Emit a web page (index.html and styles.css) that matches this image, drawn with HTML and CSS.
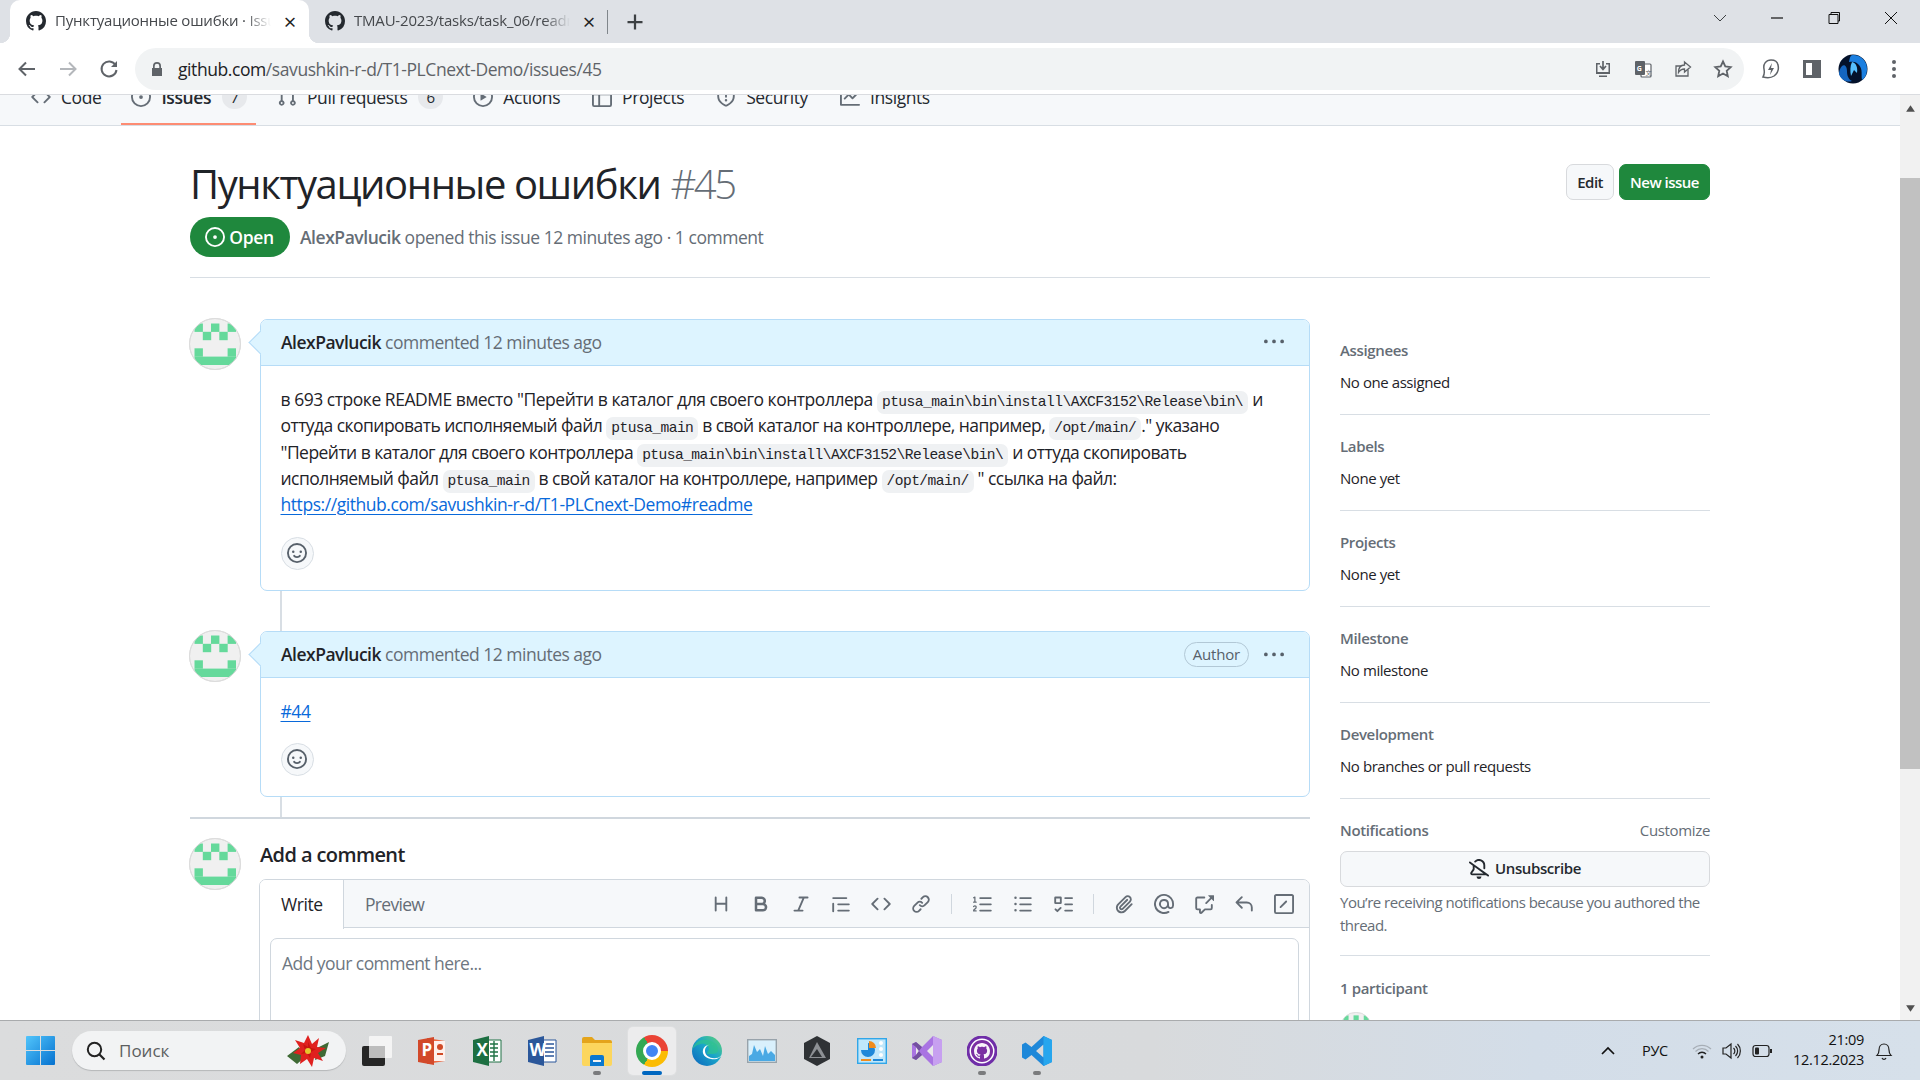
FILE: index.html
```html
<!DOCTYPE html>
<html lang="ru">
<head>
<meta charset="utf-8">
<title>Пунктуационные ошибки · Issue #45</title>
<link rel="stylesheet" href="styles.css">
</head>
<body>
<svg class="defs" aria-hidden="true">
<symbol id="mark" viewBox="0 0 16 16"><path d="M8 0c4.42 0 8 3.58 8 8a8.013 8.013 0 0 1-5.45 7.59c-.4.08-.55-.17-.55-.38 0-.27.01-1.13.01-2.2 0-.75-.25-1.23-.54-1.48 1.78-.2 3.65-.88 3.65-3.95 0-.88-.31-1.59-.82-2.15.08-.2.36-1.02-.08-2.12 0 0-.67-.22-2.2.82-.64-.18-1.32-.27-2-.27-.68 0-1.36.09-2 .27-1.53-1.03-2.2-.82-2.2-.82-.44 1.1-.16 1.92-.08 2.12-.51.56-.82 1.28-.82 2.15 0 3.06 1.86 3.75 3.64 3.95-.23.2-.44.55-.51 1.07-.46.21-1.61.55-2.33-.66-.15-.24-.6-.83-1.23-.82-.67.01-.27.38.01.53.34.19.73.9.82 1.13.16.45.68 1.31 2.69.94 0 .67.01 1.3.01 1.49 0 .21-.15.45-.55.38A7.995 7.995 0 0 1 0 8c0-4.42 3.58-8 8-8Z"/></symbol>
<symbol id="issue" viewBox="0 0 16 16"><path d="M8 9.5a1.5 1.5 0 1 0 0-3 1.5 1.5 0 0 0 0 3Z"/><path d="M8 0a8 8 0 1 1 0 16A8 8 0 0 1 8 0ZM1.5 8a6.5 6.5 0 1 0 13 0 6.5 6.5 0 0 0-13 0Z"/></symbol>
<symbol id="code" viewBox="0 0 16 16"><path d="m11.28 3.22 4.25 4.25a.75.75 0 0 1 0 1.06l-4.25 4.25a.749.749 0 0 1-1.275-.326.749.749 0 0 1 .215-.734L13.94 8l-3.72-3.72a.749.749 0 0 1 .326-1.275.749.749 0 0 1 .734.215Zm-6.56 0a.751.751 0 0 1 1.042.018.751.751 0 0 1 .018 1.042L2.06 8l3.72 3.72a.749.749 0 0 1-.326 1.275.749.749 0 0 1-.734-.215L.47 8.53a.75.75 0 0 1 0-1.06Z"/></symbol>
<symbol id="pull" viewBox="0 0 16 16"><path d="M1.5 3.25a2.25 2.25 0 1 1 3 2.122v5.256a2.251 2.251 0 1 1-1.5 0V5.372A2.25 2.25 0 0 1 1.5 3.25Zm5.677-.177L9.573.677A.25.25 0 0 1 10 .854V2.5h1A2.5 2.5 0 0 1 13.5 5v5.628a2.251 2.251 0 1 1-1.5 0V5a1 1 0 0 0-1-1h-1v1.646a.25.25 0 0 1-.427.177L7.177 3.427a.25.25 0 0 1 0-.354ZM3.75 2.5a.75.75 0 1 0 0 1.5.75.75 0 0 0 0-1.5Zm0 9.5a.75.75 0 1 0 0 1.5.75.75 0 0 0 0-1.5Zm8.25.75a.75.75 0 1 0 1.5 0 .75.75 0 0 0-1.5 0Z"/></symbol>
<symbol id="play" viewBox="0 0 16 16"><path d="M8 0a8 8 0 1 1 0 16A8 8 0 0 1 8 0ZM1.5 8a6.5 6.5 0 1 0 13 0 6.5 6.5 0 0 0-13 0Zm4.879-2.773 4.264 2.559a.25.25 0 0 1 0 .428l-4.264 2.559A.25.25 0 0 1 6 10.559V5.442a.25.25 0 0 1 .379-.215Z"/></symbol>
<symbol id="table" viewBox="0 0 16 16"><path d="M0 1.75C0 .784.784 0 1.75 0h12.5C15.216 0 16 .784 16 1.75v12.5A1.75 1.75 0 0 1 14.25 16H1.75A1.75 1.75 0 0 1 0 14.25ZM6.5 6.5v8h7.75a.25.25 0 0 0 .25-.25V6.5Zm8-1.5V1.75a.25.25 0 0 0-.25-.25H6.5V5Zm-13 1.5v7.75c0 .138.112.25.25.25H5v-8ZM5 5V1.5H1.75a.25.25 0 0 0-.25.25V5Z"/></symbol>
<symbol id="shield" viewBox="0 0 16 16"><path d="M7.467.133a1.748 1.748 0 0 1 1.066 0l5.25 1.68A1.75 1.75 0 0 1 15 3.48V7c0 1.566-.32 3.182-1.303 4.682-.983 1.498-2.585 2.813-5.032 3.855a1.697 1.697 0 0 1-1.33 0c-2.447-1.042-4.049-2.357-5.032-3.855C1.32 10.182 1 8.566 1 7V3.48a1.75 1.75 0 0 1 1.217-1.667Zm.61 1.429a.25.25 0 0 0-.153 0l-5.25 1.68a.25.25 0 0 0-.174.238V7c0 1.358.275 2.666 1.057 3.86.784 1.194 2.121 2.34 4.366 3.297a.196.196 0 0 0 .154 0c2.245-.956 3.582-2.104 4.366-3.298C13.225 9.666 13.5 8.36 13.5 7V3.48a.251.251 0 0 0-.174-.237l-5.25-1.68ZM8.75 4.75v3a.75.75 0 0 1-1.5 0v-3a.75.75 0 0 1 1.5 0ZM9 10.5a1 1 0 1 1-2 0 1 1 0 0 1 2 0Z"/></symbol>
<symbol id="graph" viewBox="0 0 16 16"><path d="M1.5 1.75V13.5h13.75a.75.75 0 0 1 0 1.5H.75a.75.75 0 0 1-.75-.75V1.75a.75.75 0 0 1 1.5 0Zm14.28 2.53-5.25 5.25a.75.75 0 0 1-1.06 0L7 7.06 4.28 9.78a.751.751 0 0 1-1.042-.018.751.751 0 0 1-.018-1.042l3.25-3.25a.75.75 0 0 1 1.06 0L10 7.94l4.72-4.72a.751.751 0 0 1 1.042.018.751.751 0 0 1 .018 1.042Z"/></symbol>
<symbol id="smiley" viewBox="0 0 16 16"><path d="M8 0a8 8 0 1 1 0 16A8 8 0 0 1 8 0ZM1.5 8a6.5 6.5 0 1 0 13 0 6.5 6.5 0 0 0-13 0Zm3.82 1.636a.75.75 0 0 1 1.038.175l.007.009c.103.118.22.222.35.31.264.178.683.37 1.285.37.602 0 1.02-.192 1.285-.371.13-.088.247-.192.35-.31l.007-.008a.75.75 0 0 1 1.222.87l-.022-.015c.02.013.021.015.021.015v.001l-.001.002-.002.003-.005.007-.014.019a2.066 2.066 0 0 1-.184.213c-.16.166-.338.316-.53.445-.63.418-1.37.638-2.127.629-.946 0-1.652-.308-2.126-.63a3.331 3.331 0 0 1-.715-.657l-.014-.02-.005-.006-.002-.003v-.002h-.001l.613-.432-.614.43a.75.75 0 0 1 .183-1.044ZM12 7a1 1 0 1 1-2 0 1 1 0 0 1 2 0ZM5 8a1 1 0 1 1 0-2 1 1 0 0 1 0 2Z"/></symbol>
<symbol id="kebab" viewBox="0 0 16 16"><path d="M8 9a1.5 1.5 0 1 0 0-3 1.5 1.5 0 0 0 0 3ZM1.5 9a1.5 1.5 0 1 0 0-3 1.5 1.5 0 0 0 0 3Zm13 0a1.5 1.5 0 1 0 0-3 1.5 1.5 0 0 0 0 3Z"/></symbol>
<symbol id="heading" viewBox="0 0 16 16"><path d="M3.75 2a.75.75 0 0 1 .75.75V7h7V2.75a.75.75 0 0 1 1.5 0v10.5a.75.75 0 0 1-1.5 0V8.5h-7v4.75a.75.75 0 0 1-1.5 0V2.75A.75.75 0 0 1 3.75 2Z"/></symbol>
<symbol id="bold" viewBox="0 0 16 16"><path d="M4 2h4.5a3.501 3.501 0 0 1 2.852 5.53A3.499 3.499 0 0 1 9.5 14H4a1 1 0 0 1-1-1V3a1 1 0 0 1 1-1Zm1 7v3h4.5a1.5 1.5 0 0 0 0-3Zm3.5-2a1.5 1.5 0 0 0 0-3H5v3Z"/></symbol>
<symbol id="italic" viewBox="0 0 16 16"><path d="M6 2.75A.75.75 0 0 1 6.75 2h6.5a.75.75 0 0 1 0 1.5h-2.505l-3.858 9H9.25a.75.75 0 0 1 0 1.5h-6.5a.75.75 0 0 1 0-1.5h2.505l3.858-9H6.75A.75.75 0 0 1 6 2.75Z"/></symbol>
<symbol id="quote" viewBox="0 0 16 16"><path d="M1.75 2.5h10.5a.75.75 0 0 1 0 1.5H1.75a.75.75 0 0 1 0-1.5Zm4 5h8.5a.75.75 0 0 1 0 1.5h-8.5a.75.75 0 0 1 0-1.5Zm0 5h8.5a.75.75 0 0 1 0 1.5h-8.5a.75.75 0 0 1 0-1.5ZM2.5 7.75v6a.75.75 0 0 1-1.5 0v-6a.75.75 0 0 1 1.5 0Z"/></symbol>
<symbol id="link" viewBox="0 0 16 16"><path d="m7.775 3.275 1.25-1.25a3.5 3.5 0 1 1 4.95 4.95l-2.5 2.5a3.5 3.5 0 0 1-4.95 0 .751.751 0 0 1 .018-1.042.751.751 0 0 1 1.042-.018 1.998 1.998 0 0 0 2.83 0l2.5-2.5a2.002 2.002 0 0 0-2.83-2.83l-1.25 1.25a.751.751 0 0 1-1.042-.018.751.751 0 0 1-.018-1.042Zm-4.69 9.64a1.998 1.998 0 0 0 2.83 0l1.25-1.25a.751.751 0 0 1 1.042.018.751.751 0 0 1 .018 1.042l-1.25 1.25a3.5 3.5 0 1 1-4.95-4.95l2.5-2.5a3.5 3.5 0 0 1 4.95 0 .751.751 0 0 1-.018 1.042.751.751 0 0 1-1.042.018 1.998 1.998 0 0 0-2.83 0l-2.5 2.5a1.998 1.998 0 0 0 0 2.83Z"/></symbol>
<symbol id="ol" viewBox="0 0 16 16"><path d="M5 3.25a.75.75 0 0 1 .75-.75h8.5a.75.75 0 0 1 0 1.5h-8.5A.75.75 0 0 1 5 3.25Zm0 5a.75.75 0 0 1 .75-.75h8.5a.75.75 0 0 1 0 1.5h-8.5A.75.75 0 0 1 5 8.25Zm0 5a.75.75 0 0 1 .75-.75h8.5a.75.75 0 0 1 0 1.5h-8.5a.75.75 0 0 1-.75-.75ZM.924 10.32a.5.5 0 0 1-.851-.525l.001-.001.001-.002.002-.004.007-.011c.097-.144.215-.273.348-.384.228-.19.588-.392 1.068-.392.468 0 .858.181 1.126.484.259.294.377.673.377 1.038 0 .987-.686 1.495-1.156 1.845l-.047.035c-.303.225-.522.4-.654.597h1.357a.5.5 0 0 1 0 1H.5a.5.5 0 0 1-.5-.5c0-1.005.692-1.52 1.167-1.875l.035-.025c.531-.396.8-.625.8-1.078a.57.57 0 0 0-.128-.376C1.806 10.068 1.695 10 1.5 10a.658.658 0 0 0-.429.163.835.835 0 0 0-.144.153ZM2.003 2.5V6h.503a.5.5 0 0 1 0 1H.5a.5.5 0 0 1 0-1h.503V3.308l-.28.14a.5.5 0 0 1-.446-.895l1.003-.5a.5.5 0 0 1 .723.447Z"/></symbol>
<symbol id="ul" viewBox="0 0 16 16"><path d="M5.75 2.5h8.5a.75.75 0 0 1 0 1.5h-8.5a.75.75 0 0 1 0-1.5Zm0 5h8.5a.75.75 0 0 1 0 1.5h-8.5a.75.75 0 0 1 0-1.5Zm0 5h8.5a.75.75 0 0 1 0 1.5h-8.5a.75.75 0 0 1 0-1.5ZM2 14a1 1 0 1 1 0-2 1 1 0 0 1 0 2Zm1-6a1 1 0 1 1-2 0 1 1 0 0 1 2 0ZM2 4a1 1 0 1 1 0-2 1 1 0 0 1 0 2Z"/></symbol>
<symbol id="task" viewBox="0 0 16 16"><path fill-rule="evenodd" d="M2 2h4a1 1 0 0 1 1 1v4a1 1 0 0 1-1 1H2a1 1 0 0 1-1-1V3a1 1 0 0 1 1-1Zm.5 1.5v3h3v-3Zm4.155 7.095a.75.75 0 0 1 0 1.06L4.03 14.28a.75.75 0 0 1-1.06 0l-1.5-1.5a.749.749 0 0 1 .326-1.275.749.749 0 0 1 .734.215l.97.97 2.095-2.095a.75.75 0 0 1 1.06 0ZM9.75 2.5h5.5a.75.75 0 0 1 0 1.5h-5.5a.75.75 0 0 1 0-1.5Zm0 5h5.5a.75.75 0 0 1 0 1.5h-5.5a.75.75 0 0 1 0-1.5Zm0 5h5.5a.75.75 0 0 1 0 1.5h-5.5a.75.75 0 0 1 0-1.5Z"/></symbol>
<symbol id="clip" viewBox="0 0 16 16"><path d="M12.212 3.02a1.753 1.753 0 0 0-2.478.003l-5.83 5.83a3.007 3.007 0 0 0-.88 2.127c0 .795.315 1.551.88 2.116.567.567 1.333.89 2.126.89.79 0 1.548-.321 2.116-.89l5.48-5.48a.75.75 0 0 1 1.061 1.06l-5.48 5.48a4.492 4.492 0 0 1-3.177 1.33c-1.2 0-2.345-.487-3.187-1.33a4.483 4.483 0 0 1-1.32-3.177c0-1.195.475-2.341 1.32-3.186l5.83-5.83a3.25 3.25 0 0 1 5.553 2.297c0 .863-.343 1.691-.953 2.301L7.439 12.39c-.375.377-.884.59-1.416.593a1.998 1.998 0 0 1-1.412-.593 1.992 1.992 0 0 1 0-2.828l5.48-5.48a.751.751 0 0 1 1.042.018.751.751 0 0 1 .018 1.042l-5.48 5.48a.492.492 0 0 0 0 .707.499.499 0 0 0 .352.154.51.51 0 0 0 .356-.154l5.833-5.827a1.755 1.755 0 0 0 0-2.481Z"/></symbol>
<symbol id="mention" viewBox="0 0 16 16"><path d="M4.75 2.37a6.501 6.501 0 0 0 6.5 11.26.75.75 0 0 1 .75 1.298A7.999 7.999 0 0 1 .989 4.148 8 8 0 0 1 16 7.75v1.5a2.75 2.75 0 0 1-5.072 1.475 3.999 3.999 0 0 1-6.65-4.19A4 4 0 0 1 12 8v1.25a1.25 1.25 0 0 0 2.5 0V7.867a6.5 6.5 0 0 0-9.75-5.496ZM10.5 8a2.5 2.5 0 1 0-5 0 2.5 2.5 0 0 0 5 0Z"/></symbol>
<symbol id="xref" viewBox="0 0 16 16"><path d="M2.75 3.5a.25.25 0 0 0-.25.25v7.5c0 .138.112.25.25.25h2a.75.75 0 0 1 .75.75v2.19l2.72-2.72a.749.749 0 0 1 .53-.22h4.5a.25.25 0 0 0 .25-.25v-2.5a.75.75 0 0 1 1.5 0v2.5A1.75 1.75 0 0 1 13.25 13H9.06l-2.573 2.573A1.458 1.458 0 0 1 4 14.543V13H2.75A1.75 1.75 0 0 1 1 11.25v-7.5C1 2.784 1.784 2 2.75 2h5.5a.75.75 0 0 1 0 1.5ZM16 1.25v4.146a.25.25 0 0 1-.427.177L14.03 4.03l-3.75 3.75a.749.749 0 0 1-1.275-.326.749.749 0 0 1 .215-.734l3.75-3.75-1.543-1.543A.25.25 0 0 1 11.604 1h4.146a.25.25 0 0 1 .25.25Z"/></symbol>
<symbol id="reply" viewBox="0 0 16 16"><path d="M6.78 1.97a.75.75 0 0 1 0 1.06L3.81 6h6.44A4.75 4.75 0 0 1 15 10.75v2.5a.75.75 0 0 1-1.5 0v-2.5a3.25 3.25 0 0 0-3.25-3.25H3.81l2.97 2.97a.749.749 0 0 1-.326 1.275.749.749 0 0 1-.734-.215L1.47 7.28a.75.75 0 0 1 0-1.06l4.25-4.25a.75.75 0 0 1 1.06 0Z"/></symbol>
<symbol id="slash" viewBox="0 0 16 16"><path d="M0 1.75C0 .784.784 0 1.75 0h12.5C15.216 0 16 .784 16 1.75v12.5A1.75 1.75 0 0 1 14.25 16H1.75A1.75 1.75 0 0 1 0 14.25Zm1.75-.25a.25.25 0 0 0-.25.25v12.5c0 .138.112.25.25.25h12.5a.25.25 0 0 0 .25-.25V1.75a.25.25 0 0 0-.25-.25Zm7.47 3.97a.75.75 0 0 1 1.06 1.06l-4.5 4.5a.75.75 0 0 1-1.06-1.06Z"/></symbol>
<symbol id="bellslash" viewBox="0 0 16 16"><path d="m4.182 4.31.016.011 10.104 7.316.013.01 1.375.996a.75.75 0 1 1-.88 1.214L13.626 13H2.518a1.516 1.516 0 0 1-1.263-2.36l1.703-2.554A.255.255 0 0 0 3 7.947V5.305L.31 3.357a.75.75 0 1 1 .88-1.214Zm7.373 7.19L4.5 6.391v1.556c0 .346-.102.683-.294.97l-1.703 2.556a.017.017 0 0 0-.003.01c0 .005.002.009.005.012l.006.004.007.001ZM8 1.5c-.997 0-1.895.416-2.534 1.086A.75.75 0 0 1 4.38 1.55 5 5 0 0 1 13 5v2.373a.75.75 0 0 1-1.5 0V5A3.5 3.5 0 0 0 8 1.5ZM8 16a2 2 0 0 1-1.985-1.75c-.017-.137.097-.25.235-.25h3.5c.138 0 .252.113.235.25A2 2 0 0 1 8 16Z"/></symbol>
<clipPath id="avclip"><circle cx="26" cy="26" r="25.5"/></clipPath>
<symbol id="avatar" viewBox="0 0 52 52">
<circle cx="26" cy="26" r="25.5" fill="#f0f0f0" stroke="#dcdcdc"/>
<g clip-path="url(#avclip)" fill="#65d99b">
<rect x="5.5" y="5.5" width="8.4" height="8.4"/><rect x="22" y="5.5" width="8.4" height="8.4"/><rect x="38.6" y="5.5" width="8.4" height="8.4"/>
<rect x="13.8" y="13.8" width="8.4" height="8.4"/><rect x="30.3" y="13.8" width="8.4" height="8.4"/>
<rect x="5.5" y="30.3" width="8.4" height="8.4"/><rect x="38.6" y="30.3" width="8.4" height="8.4"/>
<rect x="5.5" y="38.6" width="41.5" height="8.4"/>
</g>
<circle cx="26" cy="26" r="25.5" fill="none" stroke="#dcdcdc"/>
</symbol>
</svg>

<header class="tabstrip">
  <div class="tab tab-active">
    <svg class="fav"><use href="#mark"/></svg>
    <span class="tab-title">Пунктуационные ошибки · Issue #45</span>
    <span class="tab-x">×</span>
  </div>
  <div class="tab">
    <svg class="fav"><use href="#mark"/></svg>
    <span class="tab-title">TMAU-2023/tasks/task_06/readme.md</span>
    <span class="tab-x">×</span>
  </div>
  <span class="tab-sep"></span>
  <svg class="tab-plus" viewBox="0 0 16 16"><path d="M8 2v12M2 8h12" stroke="#3c4043" stroke-width="1.8" fill="none"/></svg>
  <div class="win">
    <svg viewBox="0 0 14 14"><path d="M1 4l6 6 6-6" fill="none" stroke="#3c4043"/></svg>
    <svg viewBox="0 0 14 14"><path d="M1 7h12" stroke="#111" stroke-width="1.2"/></svg>
    <svg viewBox="0 0 14 14"><path d="M2 3.5h9v9H2zM4 3.5V1.5h8.5v8.5h-1.5" fill="none" stroke="#111"/></svg>
    <svg viewBox="0 0 14 14"><path d="M1 1l12 12M13 1L1 13" stroke="#111" fill="none"/></svg>
  </div>
</header>

<nav class="toolbar">
  <svg class="tb" viewBox="0 0 24 24"><path d="M20 12H5m6-6.500L4.500 12l6.500 6.500" fill="none" stroke="#5f6368" stroke-width="2"/></svg>
  <svg class="tb" viewBox="0 0 24 24"><path d="M4 12h15m-6-6.500l6.500 6.500-6.500 6.500" fill="none" stroke="#b4b7bb" stroke-width="2"/></svg>
  <svg class="tb" viewBox="0 0 24 24"><path d="M18.500 8A7.500 7.500 0 1 0 19.500 13" fill="none" stroke="#5f6368" stroke-width="2"/><path d="M20 4v6h-6z" fill="#5f6368"/></svg>
  <div class="omni">
    <svg class="lock" viewBox="0 0 12 16"><path d="M2 7V5a4 4 0 0 1 8 0v2h1v8H1V7zm1.700 0h4.600V5a2.300 2.300 0 0 0-4.600 0z" fill="#5f6368"/></svg>
    <span class="url"><b>github.com</b>/savushkin-r-d/T1-PLCnext-Demo/issues/45</span>
    <div class="omni-icons">
      <svg viewBox="0 0 20 20"><path d="M3 4h4v1.500H4.500V13h11V5.500H13V4h4v11H3zM6 16.500h8V18H6z" fill="#5f6368"/><path d="M10 2v8m-3-3l3 3.500L13 7" fill="none" stroke="#5f6368" stroke-width="1.700"/></svg>
      <svg viewBox="0 0 20 20"><rect x="8" y="5" width="10" height="13" rx="1" fill="#fff" stroke="#5f6368" stroke-width="1.200"/><rect x="2" y="2" width="10" height="14" rx="1" fill="#5f6368"/><text x="3.800" y="12" class="gt">G</text><text x="12.500" y="15.500" class="gt dark">文</text></svg>
      <svg viewBox="0 0 20 20"><path d="M15 10.500V17H3V7h5" fill="none" stroke="#5f6368" stroke-width="1.300"/><path d="M11.500 3l6 5-6 5v-3c-3 0-4.500 1-6 3.500 0-4.500 2-7.500 6-7.500z" fill="none" stroke="#5f6368" stroke-width="1.300"/></svg>
      <svg viewBox="0 0 20 20"><path d="M10 2.500l2.300 5 5.400.6-4 3.700 1.100 5.400L10 14.500l-4.800 2.700 1.100-5.400-4-3.700 5.400-.6z" fill="none" stroke="#5f6368" stroke-width="1.800"/></svg>
    </div>
  </div>
  <svg class="tb" viewBox="0 0 22 24"><path d="M11 3C6 3 3 7 4 12c.500 3 1 5-1 8 4 1 8 1 11-1 4-3 5-7 4-11-.500-3-3-5-7-5z" fill="none" stroke="#5f6368" stroke-width="1.500"/><path d="M12 6l-4 7h3l-1 5 4-7h-3z" fill="#5f6368"/></svg>
  <svg class="tb" viewBox="0 0 24 24"><path fill-rule="evenodd" d="M3 3h18v18H3zM6 6v12h6V6z" fill="#5f6368"/></svg>
  <svg class="tb profile" viewBox="0 0 30 30"><circle cx="15" cy="15" r="14.500" fill="#04112a"/><path d="M15 1a14 14 0 0 1 14 14c0 5-2 9-5 11-1-6 1-10-3-15-2-3-6-4-10-3 1-4 1-7 4-7z" fill="#1b7fe0"/><path d="M4 12c3-2 5 1 5 5s1 8 5 10c-5 2-11-1-13-7 0-3 1-6 3-8z" fill="#1465c0"/><path d="M14 8c4 1 6 5 5 11l-3-3-3 6c-1-5-1-10 1-14z" fill="#56c0ff"/></svg>
  <svg class="tb" viewBox="0 0 24 24"><circle cx="12" cy="5" r="2" fill="#5f6368"/><circle cx="12" cy="12" r="2" fill="#5f6368"/><circle cx="12" cy="19" r="2" fill="#5f6368"/></svg>
</nav>

<div class="viewport">
  <main class="page">
    <div class="repo-nav">
      <a class="rn rn-code"><svg class="oc"><use href="#code"/></svg>Code</a>
      <a class="rn rn-active"><svg class="oc"><use href="#issue"/></svg><b>Issues</b><span class="counter">7</span></a>
      <a class="rn"><svg class="oc"><use href="#pull"/></svg>Pull requests<span class="counter">6</span></a>
      <a class="rn"><svg class="oc"><use href="#play"/></svg>Actions</a>
      <a class="rn"><svg class="oc"><use href="#table"/></svg>Projects</a>
      <a class="rn"><svg class="oc"><use href="#shield"/></svg>Security</a>
      <a class="rn"><svg class="oc"><use href="#graph"/></svg>Insights</a>
    </div>
    <div class="container">
      <section class="issue-head">
        <div class="title-row">
          <h1 class="title">Пунктуационные ошибки <span class="num">#45</span></h1>
          <div class="actions"><button class="btn">Edit</button><button class="btn btn-green">New issue</button></div>
        </div>
        <div class="meta">
          <span class="pill"><svg class="oc"><use href="#issue"/></svg>Open</span>
          <span class="meta-text"><b>AlexPavlucik</b> opened this issue 12 minutes ago · 1 comment</span>
        </div>
      </section>
      <div class="columns">
        <div class="discussion">
          <article class="item">
            <svg class="avatar"><use href="#avatar"/></svg>
            <div class="box">
              <div class="box-head"><span><b>AlexPavlucik</b> <span class="muted">commented 12 minutes ago</span></span>
                <svg class="oc kebab"><use href="#kebab"/></svg></div>
              <div class="box-body">
                <p class="md md-long"><span class="l1">в 693 строке README вместо "Перейти в каталог для своего контроллера <code>ptusa_main\bin\install\AXCF3152\Release\bin\</code> и</span><br>оттуда скопировать исполняемый файл <code>ptusa_main</code> в свой каталог на контроллере, например, <code>/opt/main/</code>." указано<br>"Перейти в каталог для своего контроллера <code>ptusa_main\bin\install\AXCF3152\Release\bin\</code> и оттуда скопировать<br>исполняемый файл <code>ptusa_main</code> в свой каталог на контроллере, например <code>/opt/main/</code> " ссылка на файл:<br><a class="lnk">https://github.com/savushkin-r-d/T1-PLCnext-Demo#readme</a></p>
                <button class="react"><svg class="oc"><use href="#smiley"/></svg></button>
              </div>
            </div>
          </article>
          <div class="tl tl-40"></div>
          <article class="item">
            <svg class="avatar"><use href="#avatar"/></svg>
            <div class="box">
              <div class="box-head"><span><b>AlexPavlucik</b> <span class="muted">commented 12 minutes ago</span></span>
                <span class="author">Author</span>
                <svg class="oc kebab"><use href="#kebab"/></svg></div>
              <div class="box-body">
                <p class="md"><a class="lnk">#44</a></p>
                <button class="react"><svg class="oc"><use href="#smiley"/></svg></button>
              </div>
            </div>
          </article>
          <div class="tl tl-20"></div>
          <div class="thick"></div>
          <article class="item item-new">
            <svg class="avatar"><use href="#avatar"/></svg>
            <div class="composer">
              <h2 class="add">Add a comment</h2>
              <div class="editor">
                <div class="ed-head">
                  <span class="ed-tab on">Write</span>
                  <span class="ed-tab">Preview</span>
                  <div class="ed-tools">
                    <svg class="oc"><use href="#heading"/></svg>
                    <svg class="oc"><use href="#bold"/></svg>
                    <svg class="oc"><use href="#italic"/></svg>
                    <svg class="oc"><use href="#quote"/></svg>
                    <svg class="oc"><use href="#code"/></svg>
                    <svg class="oc"><use href="#link"/></svg>
                    <i class="ed-sep"></i>
                    <svg class="oc"><use href="#ol"/></svg>
                    <svg class="oc"><use href="#ul"/></svg>
                    <svg class="oc"><use href="#task"/></svg>
                    <i class="ed-sep"></i>
                    <svg class="oc"><use href="#clip"/></svg>
                    <svg class="oc"><use href="#mention"/></svg>
                    <svg class="oc"><use href="#xref"/></svg>
                    <svg class="oc"><use href="#reply"/></svg>
                    <svg class="oc"><use href="#slash"/></svg>
                  </div>
                </div>
                <div class="ed-body"><div class="ta">Add your comment here...</div></div>
              </div>
            </div>
          </article>
        </div>
        <aside class="sidebar">
          <div class="sec"><div class="lab">Assignees</div><div class="val">No one assigned</div></div>
          <div class="sec"><div class="lab">Labels</div><div class="val">None yet</div></div>
          <div class="sec"><div class="lab">Projects</div><div class="val">None yet</div></div>
          <div class="sec"><div class="lab">Milestone</div><div class="val">No milestone</div></div>
          <div class="sec"><div class="lab">Development</div><div class="val">No branches or pull requests</div></div>
          <div class="sec sec-notif">
            <div class="lab lab-row"><span>Notifications</span><span class="cust">Customize</span></div>
            <button class="unsub"><svg class="oc"><use href="#bellslash"/></svg>Unsubscribe</button>
            <p class="why">You’re receiving notifications because you authored the thread.</p>
          </div>
          <div class="sec sec-last"><div class="lab">1 participant</div><svg class="mini"><use href="#avatar"/></svg></div>
        </aside>
      </div>
    </div>
  </main>
  <div class="scrollbar">
    <svg class="arrow" viewBox="0 0 10 10"><path d="M5 2l4 6H1z" fill="#505050"/></svg>
    <div class="thumb"></div>
    <svg class="arrow arrow-d" viewBox="0 0 10 10"><path d="M5 8L1 2h8z" fill="#505050"/></svg>
  </div>
</div>

<footer class="taskbar">
  <svg class="start" viewBox="0 0 29 29"><defs><linearGradient id="wg" x1="0" y1="0" x2="1" y2="1"><stop offset="0" stop-color="#52c5fb"/><stop offset="1" stop-color="#0571cf"/></linearGradient></defs><path d="M0 1a1 1 0 0 1 1-1h13v14H0zM15 0h13a1 1 0 0 1 1 1v13H15zM0 15h14v14H1a1 1 0 0 1-1-1zM15 15h14v13a1 1 0 0 1-1 1H15z" fill="url(#wg)"/></svg>
  <div class="search">
    <svg class="s-ico" viewBox="0 0 20 20"><circle cx="8.500" cy="8.500" r="6.700" fill="none" stroke="#222" stroke-width="2"/><path d="M13.500 13.500l5 5" stroke="#222" stroke-width="2.200"/></svg>
    <span class="s-txt">Поиск</span>
    <svg class="flower" viewBox="0 0 46 34"><path d="M2 22l12-9 6 10-8 7zM44 8l-12 6-2 12 10-4z" fill="#3f6a35"/><path d="M23 1l4 9 7-6-2 9 9 1-8 5 5 8-9-3-2 9-5-8-7 5 1-9-8-2 7-5-5-8 9 3z" fill="#e0211f"/><path d="M23 8l3 6 5 1-5 3-1 6-3-5-6 1 4-4-2-6 5 3z" fill="#c9150f"/><circle cx="23" cy="17" r="3" fill="#e6c52c"/></svg>
  </div>
  <div class="slot"><svg class="ti" viewBox="0 0 30 30"><rect x="0" y="10" width="23" height="20" rx="2" fill="#262626"/><rect x="7" y="0" width="23" height="22" rx="1" fill="#f4f4f4"/><rect x="7" y="10" width="16" height="12" fill="#bdbdbd"/></svg></div>
  <div class="slot"><svg class="ti" viewBox="0 0 30 30"><path d="M10 2l18 3v20l-18 3z" fill="#ef6a43"/><path d="M17 5h11v20H17z" fill="#fff" opacity=".9"/><rect x="20" y="8" width="6" height="6" rx="3" fill="#d04a26"/><rect x="20" y="17" width="6" height="2" fill="#d04a26"/><path d="M1 4l16-3v28L1 26z" fill="#d2492a"/><text x="4.500" y="20" class="ti-l">P</text></svg></div>
  <div class="slot"><svg class="ti" viewBox="0 0 30 30"><path d="M15 4h14v22H15z" fill="#fff" stroke="#217346"/><path d="M18 8h8M18 12h8M18 16h8M18 20h8M22 5v20" stroke="#217346" stroke-width="1.400"/><path d="M1 4l16-4v30L1 26z" fill="#1d6f42"/><text x="4.500" y="20" class="ti-l">X</text></svg></div>
  <div class="slot"><svg class="ti" viewBox="0 0 30 30"><path d="M15 4h14v22H15z" fill="#fff" stroke="#2b579a"/><path d="M18 8h9M18 12h9M18 16h9M18 20h9" stroke="#2b579a" stroke-width="1.500"/><path d="M1 4l16-4v30L1 26z" fill="#2b579a"/><text x="2.500" y="20" class="ti-l">W</text></svg></div>
  <div class="slot"><svg class="ti" viewBox="0 0 30 30"><path d="M0 3a2 2 0 0 1 2-2h8l3 3h15a2 2 0 0 1 2 2v2H0z" fill="#e4a41b"/><path d="M0 7h30v21a2 2 0 0 1-2 2H2a2 2 0 0 1-2-2z" fill="#fcd65d"/><path d="M8 21a2 2 0 0 1 2-2h10a2 2 0 0 1 2 2v9H8z" fill="#0b78cf"/><rect x="11" y="24" width="8" height="2" fill="#f2f2f2"/></svg><i class="dot"></i></div>
  <div class="slot slot-on"><span class="chrome"><span class="chrome-c"></span></span><i class="bar"></i></div>
  <div class="slot"><svg class="ti" viewBox="0 0 30 30"><defs><linearGradient id="eg" x1="1" y1="0" x2="0" y2="1"><stop offset="0" stop-color="#62d66d"/><stop offset=".45" stop-color="#1ba7c9"/><stop offset="1" stop-color="#0b63bd"/></linearGradient></defs><circle cx="15" cy="15" r="15" fill="url(#eg)"/><path d="M30 18c-1 4-6 6-11 5-6-1-9-5-8-9 1-5 6-6 10-5-5-1-8 2-8 6 0 5 6 8 11 7 3 0 5-2 6-4z" fill="#fff"/><path d="M0 14C2 6 9 3 15 4c7 1 11 5 11 10 0 3-3 4-6 4h-5c0-3 2-3 2-6-1-3-4-5-8-4-5 1-8 4-9 6z" fill="#2fc48a" opacity=".65"/></svg></div>
  <div class="slot"><svg class="ti" viewBox="0 0 30 30"><rect x=".7" y="3.700" width="28.600" height="22.600" fill="#d9f0fc" stroke="#98a3ab" stroke-width="1.400"/><path d="M2 25V20l3-2 2-9 3 7 3-3 3 7 2-10 3 8 3-3 4 4v6z" fill="#4aa9e4"/></svg></div>
  <div class="slot"><svg class="ti" viewBox="0 0 30 30"><path d="M15 0l13 7v16l-13 7-13-7V7z" fill="#2f3235"/><path d="M15 6l9 16H7z" fill="#8d9094"/><path d="M15 13l5 8H9z" fill="#2f3235"/></svg></div>
  <div class="slot"><svg class="ti" viewBox="0 0 30 30"><rect x=".7" y="2.700" width="28.600" height="24.600" fill="#bfe7fb" stroke="#31a6e8" stroke-width="1.400"/><path d="M11 7a7 7 0 1 1-7 7h7z" fill="#1e88d9"/><path d="M12 5a7 7 0 0 1 7 7h-7z" fill="#f08c1d"/><rect x="4" y="23" width="10" height="2" fill="#f08c1d"/><rect x="16" y="23" width="10" height="2" fill="#1e88d9"/><circle cx="24" cy="7" r="2" fill="#fff"/><circle cx="24" cy="13" r="2" fill="#fff"/><circle cx="24" cy="19" r="2" fill="#fff"/></svg></div>
  <div class="slot"><svg class="ti" viewBox="0 0 30 30"><path d="M21 0l9 4v22l-9 4-11-11-6 5-4-2V8l4-2 6 5z" fill="#a974e2"/><path d="M21 0l9 4v22l-9 4z" fill="#c7a0f0"/><path d="M21 9l-6 6 6 6z" fill="#e8e8ea"/><path d="M4 11v8l3-4z" fill="#e8e8ea"/><path d="M0 8l4-2 6 5-3 4-3-4zM0 22l4 2 6-5-3-4-3 4z" fill="#73509f"/></svg></div>
  <div class="slot"><svg class="ti" viewBox="0 0 30 30"><circle cx="15" cy="15" r="14" fill="#fff" stroke="#6f2da8" stroke-width="3"/><circle cx="15" cy="15" r="11" fill="#7b2fa3"/><svg x="7" y="7" width="16" height="16"><use href="#mark" fill="#fff" opacity=".95"/></svg></svg><i class="dot"></i></div>
  <div class="slot"><svg class="ti" viewBox="0 0 30 30"><path d="M21.500 0L30 4v22l-8.500 4L9.500 19l-6 4.500L0 21.500v-13L3.500 6.500l6 4.500zM21.500 8.500L14 15l7.500 6.500z" fill-rule="evenodd" fill="#1e88d9"/><path d="M21.500 0L30 4v22l-8.500 4V21.500V8.500z" fill="#26a6ee"/></svg><i class="dot"></i></div>
  <div class="tray">
    <svg class="t-caret" viewBox="0 0 16 10"><path d="M2 8l6-6 6 6" fill="none" stroke="#111" stroke-width="1.700"/></svg>
    <span class="t-lang">РУС</span>
    <svg class="t-i" viewBox="0 0 20 16"><path d="M1 6a13 13 0 0 1 18 0M3.500 8.500a9 9 0 0 1 13 0" fill="none" stroke="#a7aeb6" stroke-width="1.300"/><path d="M6 11a5.500 5.500 0 0 1 8 0" fill="none" stroke="#222" stroke-width="1.300"/><circle cx="10" cy="14" r="1.500" fill="#222"/></svg>
    <svg class="t-i" viewBox="0 0 20 18"><path d="M1 6h3l5-4v14l-5-4H1z" fill="none" stroke="#222" stroke-width="1.200"/><path d="M11.500 6a4 4 0 0 1 0 6M13.500 4a7 7 0 0 1 0 10M15.500 2a10 10 0 0 1 0 14" fill="none" stroke="#222" stroke-width="1.200"/></svg>
    <svg class="t-i" viewBox="0 0 20 14"><rect x="1" y="1.500" width="16" height="11" rx="2.500" fill="none" stroke="#222" stroke-width="1.200"/><rect x="3" y="3.500" width="4" height="7" rx="1" fill="#222"/><rect x="18" y="5" width="2" height="4" fill="#222"/></svg>
    <div class="clock"><span>21:09</span><span>12.12.2023</span></div>
    <svg class="t-bell" viewBox="0 0 18 20"><path d="M2 14.500c1.500-1.500 2-3 2-5.500 0-3.500 2-6 5-6s5 2.500 5 6c0 2.500.5 4 2 5.500z" fill="none" stroke="#222" stroke-width="1.200"/><path d="M7 17a2.200 2.200 0 0 0 4 0" fill="none" stroke="#222" stroke-width="1.200"/></svg>
  </div>
</footer>
</body>
</html>
```

FILE: styles.css
```css
* { box-sizing: border-box; }
html, body { margin: 0; height: 1080px; }
body {
  display: flex; flex-direction: column; overflow: hidden; background: #fff;
  font-family: "Open Sans", "Noto Sans", sans-serif; color: #1f2328; font-size: 17.5px; line-height: 1.5;
}
.defs { position: absolute; width: 0; height: 0; }
b { font-weight: 600; }
p { margin: 0; }

/* tab strip */
.tabstrip { height: 43px; flex: none; background: #dee1e6; display: flex; align-items: flex-end; padding-left: 10px; position: relative; }
.tab { width: 299px; height: 43px; display: flex; align-items: center; padding: 0 12px 2px 16px; font-size: 15px; color: #45484c; }
.tab-active { background: #fff; border-radius: 10px 10px 0 0; position: relative; }
.tab-active::before, .tab-active::after { content: ""; position: absolute; bottom: 0; width: 10px; height: 10px; }
.tab-active::before { left: -10px; background: radial-gradient(circle at 0 0, transparent 10px, #fff 10.5px); }
.tab-active::after { right: -10px; background: radial-gradient(circle at 100% 0, transparent 10px, #fff 10.5px); }
.fav { width: 20px; height: 20px; flex: none; fill: #24292f; }
.tab-title { flex: 1; min-width: 0; margin-left: 9px; overflow: hidden; white-space: nowrap; letter-spacing: -.2px;
  -webkit-mask-image: linear-gradient(90deg, #000 88%, transparent 100%); mask-image: linear-gradient(90deg, #000 88%, transparent 100%); }
.tab-x { width: 14px; margin-left: 12px; font-size: 22px; line-height: 1; color: #222; text-align: center; }
.tab-sep { width: 1px; height: 24px; background: #80868b; margin: 0 0 9px -1px; align-self: flex-end; }
.tab-plus { width: 20px; height: 20px; margin: 0 0 11px 17px; }
.win { margin-left: auto; align-self: flex-start; display: flex; padding-top: 11px; margin-right: 22px; }
.win svg { width: 14px; height: 14px; margin-left: 43px; }
.win svg:first-child { margin-left: 0; }

/* toolbar */
.toolbar { height: 52px; flex: none; background: #fff; border-bottom: 1px solid #dadce0; display: flex; align-items: center; padding: 0 14px 0 15px; }
.tb { width: 24px; height: 24px; flex: none; margin-right: 17px; }
.toolbar .tb:last-child { margin-right: 0; }
.omni { flex: 1; height: 42px; margin: 0 15px 0 -3px; background: #f1f3f4; border-radius: 21px; display: flex; align-items: center; padding-left: 16px; }
.lock { width: 12px; height: 16px; flex: none; }
.url { margin-left: 15px; padding-top: 2px; font-size: 17.500px; color: #5f6368; letter-spacing: -.42px; white-space: nowrap; }
.url b { font-weight: 400; color: #202124; }
.omni-icons { margin-left: auto; display: flex; gap: 20px; padding-right: 11px; }
.omni-icons svg { width: 20px; height: 20px; }
.gt { font: 700 7px "Open Sans", sans-serif; fill: #fff; }
.gt.dark { fill: #5f6368; font: 400 6px "Noto Sans CJK SC", sans-serif; }
.profile { width: 30px; height: 30px; margin-left: -3px; margin-right: 14px; }

/* viewport */
.viewport { flex: 1; min-height: 0; display: flex; overflow: hidden; }
.page { flex: 1; min-width: 0; overflow: hidden; }
.scrollbar { width: 20px; flex: none; background: #f1f1f1; display: flex; flex-direction: column; align-items: center; }
.arrow { width: 11px; height: 11px; margin-top: 8px; flex: none; }
.thumb { width: 20px; height: 591px; background: #c1c1c1; margin-top: 64px; }
.arrow-d { margin-top: auto; margin-bottom: 6px; }

.repo-nav { height: 31px; background: #f6f8fa; border-bottom: 1px solid #d8dee4; display: flex; align-items: flex-end; padding-left: 31px; overflow: hidden; }
.rn { display: flex; align-items: center; height: 45px; flex: none; padding-bottom: 11px; margin-right: 30px; color: #24292f; white-space: nowrap; position: relative; letter-spacing: -.42px; }
.rn:nth-child(n+4) { margin-right: 32px; }
.rn .oc { margin-right: 10px; fill: #656d76; }
.rn-active::after { content: ""; position: absolute; left: -10px; right: -9px; bottom: 0; height: 2.5px; background: #fd8c73; }
.counter { min-width: 25px; height: 24px; line-height: 24px; margin-left: 11px; padding: 0 8px; text-align: center; border-radius: 12px; background: #e7e9ec; font-size: 15px; font-weight: 500; letter-spacing: 0; }
.oc { width: 20px; height: 20px; flex: none; fill: currentColor; }

.container { padding: 0 190px; }
.issue-head { padding: 28px 0 19.500px; border-bottom: 1px solid #d8dee4; }
.title-row { display: flex; justify-content: space-between; align-items: flex-start; }
.title { margin: 0; font-size: 40px; line-height: 60px; font-weight: 400; color: #1f2328; letter-spacing: -1.400px; white-space: nowrap; }
.num { color: #656d76; font-weight: 300; letter-spacing: -2.500px; margin-left: 1px; }
.actions { display: flex; gap: 5px; margin-top: 10px; }
.btn { height: 36px; padding: 0 10px; font: 600 15px/1 "Open Sans", sans-serif; letter-spacing: -.5px; color: #24292f; background: #f6f8fa; border: 1px solid #d8dadd; border-radius: 7px; }
.btn-green { background: #1f883d; color: #fff; border-color: #1f883d; }
.meta { display: flex; align-items: center; margin-top: 3px; }
.pill { height: 40px; width: 100px; padding-right: 1px; border-radius: 20px; background: #1f883d; color: #fff; display: flex; align-items: center; justify-content: center; gap: 4px; font-weight: 600; letter-spacing: -.4px; }
.meta-text { margin-left: 10px; color: #656d76; letter-spacing: -.46px; white-space: nowrap; }

.columns { display: flex; gap: 30px; padding-top: 41px; }
.discussion { width: 1120px; flex: none; }
.item { display: flex; gap: 20px; }
.avatar { width: 52px; height: 52px; flex: none; margin: -1px -1px 0 -1px; }
.box { flex: 1; min-width: 0; border: 1.250px solid #b6dcf7; border-radius: 7px; position: relative; }
.box::before { content: ""; position: absolute; left: -9px; top: 14px; width: 16px; height: 16px; transform: rotate(45deg); background: #ddf4ff; border-left: 1.250px solid #b6dcf7; border-bottom: 1.250px solid #b6dcf7; }
.box-head { position: relative; height: 46.500px; padding: 0 20px; background: #ddf4ff; border-bottom: 1.250px solid #b6dcf7; border-radius: 6px 6px 0 0; display: flex; align-items: center; letter-spacing: -.5px; white-space: nowrap; }
.muted { color: #656d76; }
.kebab { margin-left: auto; fill: #57606a; width: 20px; height: 20px; margin-right: 5px; }
.author { margin-left: auto; height: 25px; line-height: 23px; padding: 0 8px; border: 1.250px solid #b2c8d6; border-radius: 13px; font-size: 15px; font-weight: 500; color: #57606a; letter-spacing: -.2px; }
.author + .kebab { margin-left: 15px; }
.box-body { padding: 20px 20px 20px 19.500px; }
.md { white-space: nowrap; letter-spacing: -.55px; line-height: 26.250px; }
.md-long { padding-bottom: 1.600px; }
.l1 { letter-spacing: -.47px; }
code { font: 14.600px/1 "Liberation Mono", monospace; letter-spacing: -.55px; background: #eff1f3; padding: 3px 5px 4px; border-radius: 7px; }
.lnk { color: #0969da; text-decoration: underline; text-underline-offset: 3px; letter-spacing: -.44px; }
.react { display: flex; width: 33px; height: 33px; padding: 0; margin-top: 18px; align-items: center; justify-content: center; border-radius: 50%; border: 1.250px solid #d8dee4; background: #f6f8fa; color: #57606a; }
.tl { width: 2px; margin-left: 90px; background: #d8dee4; }
.tl-40 { height: 40px; }
.tl-20 { height: 20px; }
.thick { height: 2.500px; background: #d0d7de; }
.item-new { margin-top: 18.500px; }
.item-new .avatar { margin-top: 0; }
.composer { flex: 1; min-width: 0; }
.add { margin: 2px 0 9px; font-size: 20px; line-height: 30px; font-weight: 600; letter-spacing: -.6px; }
.editor { border: 1.250px solid #d0d7de; border-radius: 7px 7px 0 0; height: 180px; margin-left: -1px; }
.ed-head { height: 48px; display: flex; background: #f6f8fa; border-bottom: 1.250px solid #d0d7de; border-radius: 6px 6px 0 0; }
.ed-tab { width: 84px; height: 49px; display: flex; align-items: center; padding-left: 21px; color: #656d76; letter-spacing: -.7px; flex: none; }
.ed-tab.on { background: #fff; color: #1f2328; border-right: 1.250px solid #d0d7de; border-radius: 6px 0 0 0; position: relative; letter-spacing: -.4px; }
.ed-tools { margin-left: auto; display: flex; align-items: center; gap: 20px; padding: 1px 15px 0 0; color: #656d76; }
.ed-sep { width: 1px; height: 20px; background: #d0d7de; margin: 0 .25px; }
.ed-body { padding: 10px; }
.ta { height: 140px; border: 1.250px solid #d0d7de; border-radius: 7px; padding: 11px 11px; color: #6e7781; letter-spacing: -.55px; }

.sidebar { width: 370px; flex: none; font-size: 15px; line-height: 22.500px; }
.sec { padding: 20.750px 0 19.750px; border-bottom: 1px solid #d8dee4; }
.sec + .sec { padding-top: 20.250px; padding-bottom: 20.250px; }
.lab { font-weight: 600; color: #656d76; letter-spacing: -.35px; }
.val { margin-top: 9.500px; color: #1f2328; letter-spacing: -.43px; }
.lab-row { display: flex; justify-content: space-between; }
.cust { font-weight: 400; letter-spacing: -.35px; }
.unsub { width: 100%; height: 36px; margin-top: 9.500px; display: flex; align-items: center; justify-content: center; gap: 6px; border: 1px solid #d8dadd; border-radius: 7px; background: #f6f8fa; font: 600 15px/1 "Open Sans", sans-serif; color: #24292f; letter-spacing: -.4px; }
.why { margin-top: 4px; color: #656d76; letter-spacing: -.5px; line-height: 23px; }
.sec.sec-notif { padding-bottom: 18px; }
.sec.sec-last { border: 0; padding-top: 21px; }
.mini { width: 32px; height: 32px; display: block; margin: 13px 0 0 0; }

/* taskbar */
.taskbar { height: 60px; flex: none; background: linear-gradient(90deg, #dbdcdd 0%, #d8dadc 60%, #d3dde8 80%, #d6e0ea 100%); border-top: 1px solid #a9abad; display: flex; align-items: center; padding-left: 26px; font-family: "Open Sans", sans-serif; position: relative; }
.start { width: 29px; height: 29px; flex: none; margin-right: 17px; }
.search { width: 274px; height: 39px; border-radius: 20px; background: #f2f3f4; box-shadow: 0 1px 1px #b5b7b9; display: flex; align-items: center; padding-left: 14px; margin-right: 7px; flex: none; }
.s-ico { width: 20px; height: 20px; flex: none; }
.s-txt { margin-left: 13px; font-size: 17px; color: #5c5e60; }
.flower { width: 46px; height: 34px; margin-left: auto; margin-right: 15px; flex: none; }
.slot { width: 48px; height: 48px; flex: none; margin-right: 7px; display: flex; align-items: center; justify-content: center; position: relative; border-radius: 5px; }
.slot-on { background: #ececed; box-shadow: 0 0 0 1px #dedfe0; }
.ti { width: 30px; height: 30px; }
.ti-l { font: 700 17px "Open Sans", sans-serif; fill: #fff; }
.dot { position: absolute; bottom: 0; left: 20px; width: 8px; height: 4px; border-radius: 2px; background: #7a7b7d; }
.bar { position: absolute; bottom: 0; left: 14px; width: 20px; height: 4px; border-radius: 2px; background: #0067c0; }
.chrome { width: 32px; height: 32px; border-radius: 50%; background: conic-gradient(#ea4335 0 90deg, #fbbc04 90deg 210deg, #34a853 210deg 330deg, #ea4335 330deg); display: flex; align-items: center; justify-content: center; }
.chrome-c { border-radius: 50%; background: #4285f4; border: 3px solid #fff; box-sizing: content-box; width: 12px; height: 12px; }
.tray { margin-left: auto; display: flex; align-items: center; padding-right: 27px; color: #111; }
.t-caret { width: 16px; height: 10px; margin-right: 19px; }
.t-lang { width: 40px; text-align: center; font-size: 14.500px; margin-right: 12px; letter-spacing: -.3px; }
.t-i { width: 20px; height: 18px; margin: 0 5px; }
.clock { width: 87px; display: flex; flex-direction: column; align-items: flex-end; font-size: 14.500px; line-height: 20px; letter-spacing: -.3px; padding-bottom: 2px; }
.t-bell { width: 18px; height: 20px; margin-left: 11px; }
```
